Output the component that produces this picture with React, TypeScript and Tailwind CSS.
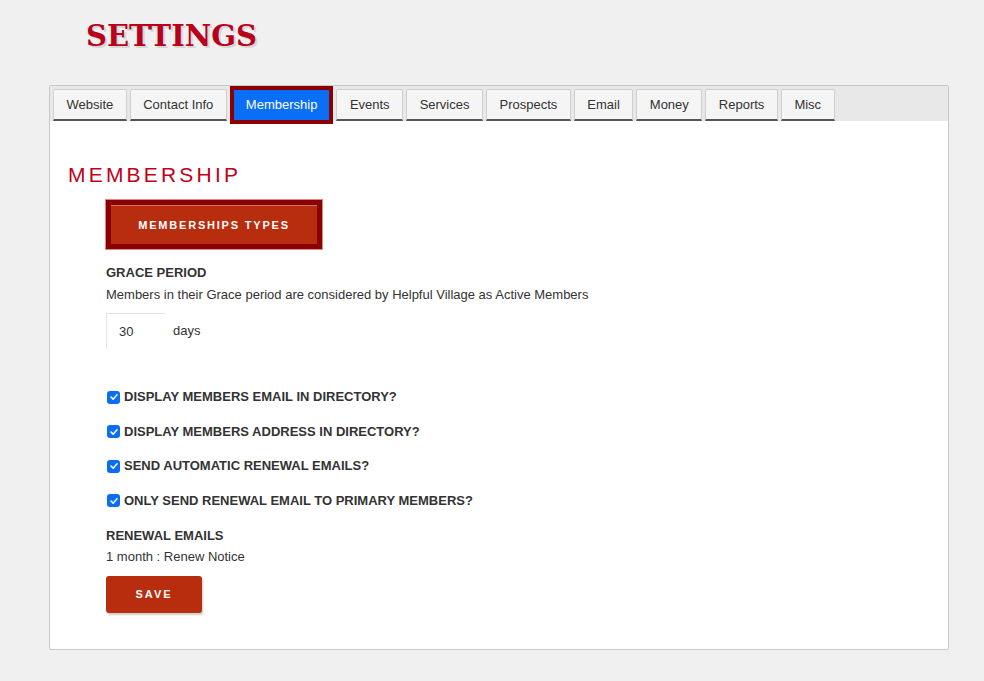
import React from "react";

const tabs = [
  "Website",
  "Contact Info",
  "Membership",
  "Events",
  "Services",
  "Prospects",
  "Email",
  "Money",
  "Reports",
  "Misc",
];

const options = [
  "Display members email in directory?",
  "Display members address in directory?",
  "Send automatic renewal emails?",
  "Only send renewal email to primary members?",
];

const Check = () => (
  <span className="flex h-[13px] w-[13px] shrink-0 items-center justify-center rounded-[3px] bg-[#0a6ef5]">
    <svg viewBox="0 0 12 12" className="h-[10px] w-[10px]">
      <path
        d="M2.5 6.2 L5 8.6 L9.6 3.4"
        fill="none"
        stroke="white"
        strokeWidth="1.9"
        strokeLinecap="round"
        strokeLinejoin="round"
      />
    </svg>
  </span>
);

export default function App() {
  return (
    <div className="min-h-[681px] bg-[#f0f0f0] pb-8 font-['Liberation_Sans',Arial,sans-serif] text-[13px] text-[#333]">
      <div className="pl-[86px] pt-[18px]">
        <h1 className="font-['DejaVu_Serif',serif] text-[29px] font-bold leading-[36px] text-[#b8001c] [text-shadow:2px_2px_0_#d6d6d6]">
          SETTINGS
        </h1>
      </div>

      <div className="ml-[49px] mt-[31px] w-[900px] rounded-[2px] border border-[#c8c8c8] bg-white">
        {/* tabs */}
        <div className="flex h-[35px] items-end gap-[3px] bg-[#e8e8e8] pl-[3px]">
          {tabs.map((t) =>
            t === "Membership" ? (
              <div
                key={t}
                className="relative -mb-[3px] flex h-[38px] items-center border-[4px] border-[#8b0000] bg-[#0a6ef7] px-[12px] text-white"
              >
                {t}
              </div>
            ) : (
              <div
                key={t}
                className="flex h-[32px] items-center rounded-t-[2px] border border-b-2 border-[#cfcfcf] border-b-[#555] bg-[#f5f5f5] px-[12.5px] pt-[1px]"
              >
                {t}
              </div>
            )
          )}
        </div>

        {/* content */}
        <div className="px-[18px] pb-[36px] pt-[40px]">
          <h2 className="text-[21px] font-normal leading-[27px] tracking-[3.2px] text-[#c0001a]">
            MEMBERSHIP
          </h2>

          <div className="ml-[38px]">
            <div className="mt-[12px] inline-block border-[5px] border-[#8b0000] outline outline-1 outline-[#d88]">
              <button className="flex h-[39px] w-[206px] items-center justify-center border-t border-t-[#d4715a] bg-[#b72d0e] text-[11px] font-bold tracking-[1.8px] text-white">
                MEMBERSHIPS TYPES
              </button>
            </div>

            <div className="mt-[16px] font-bold leading-[16px]">GRACE PERIOD</div>
            <div className="mt-[6px] leading-[16px]">
              Members in their Grace period are considered by Helpful Village as Active Members
            </div>

            <div className="mt-[10px] flex items-center">
              <div className="flex h-[36px] w-[59px] items-center border-l border-t border-[#e4e4e4] pl-[12px]">
                30
              </div>
              <span className="ml-[8px]">days</span>
            </div>

            <div className="mt-[40px] flex flex-col gap-[18.5px]">
              {options.map((o) => (
                <div key={o} className="flex h-[16px] items-center gap-[4px] pl-[1px]">
                  <Check />
                  <span className="font-bold uppercase">{o}</span>
                </div>
              ))}
            </div>

            <div className="mt-[19px] font-bold leading-[16px]">RENEWAL EMAILS</div>
            <div className="mt-[5px] leading-[16px]">1 month : Renew Notice</div>

            <button className="mt-[11px] flex h-[37px] w-[96px] items-center justify-center rounded-[3px] bg-[#b72d0e] text-[11px] font-bold tracking-[2px] text-white shadow-[1px_2px_2px_rgba(0,0,0,0.2)]">
              SAVE
            </button>
          </div>
        </div>
      </div>
    </div>
  );
}
